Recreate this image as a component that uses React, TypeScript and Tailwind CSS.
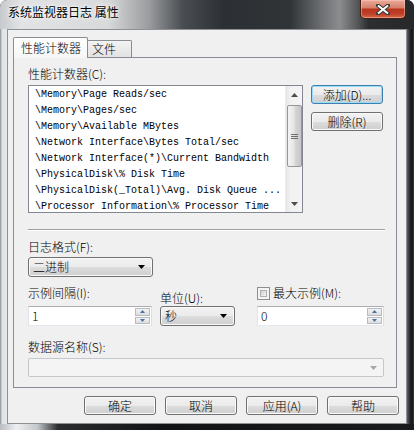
import React from 'react';

// Win7 style "system monitor log properties" dialog

const counters = [
  '\\Memory\\Page Reads/sec',
  '\\Memory\\Pages/sec',
  '\\Memory\\Available MBytes',
  '\\Network Interface\\Bytes Total/sec',
  '\\Network Interface(*)\\Current Bandwidth',
  '\\PhysicalDisk\\% Disk Time',
  '\\PhysicalDisk(_Total)\\Avg. Disk Queue ...',
  '\\Processor Information\\% Processor Time',
];

const btnBg =
  'bg-[linear-gradient(180deg,#f2f2f2_0%,#ebebeb_50%,#dddddd_50%,#cfcfcf_100%)]';

function Button({ label, focused }: { label: string; focused?: boolean }) {
  return (
    <div
      className={`w-[72px] h-[19px] rounded-[3px] border flex items-center justify-center leading-none ${btnBg} ${
        focused
          ? 'border-[#3c7fb1] shadow-[inset_0_0_0_1px_#9adcf8]'
          : 'border-[#707070] shadow-[inset_0_0_0_1px_#fafafa]'
      }`}
    >
      {label}
    </div>
  );
}

function Arrow({ color = '#000' }: { color?: string }) {
  return (
    <svg width="7" height="4" viewBox="0 0 7 4">
      <path d="M0 0h7L3.5 4z" fill={color} />
    </svg>
  );
}

function Combo({ value, width }: { value: string; width: string }) {
  return (
    <div
      className={`${width} h-[20px] rounded-[3px] border border-[#707070] shadow-[inset_0_0_0_1px_#fafafa] ${btnBg} flex items-center pl-[4px] pr-[7px]`}
    >
      <span className="flex-1 leading-none">{value}</span>
      <Arrow />
    </div>
  );
}

function SpinInput({ value, width }: { value: string; width: string }) {
  return (
    <div
      className={`${width} h-[20px] border border-[#abadb3] border-l-[#e2e3ea] border-r-[#dbdfe6] border-b-[#e3e9ef] bg-white flex items-stretch p-[1px]`}
    >
      <span className="flex-1 pl-[2px] leading-[16px]">{value}</span>
      <div className="w-[15px] flex flex-col gap-[1px]">
        <div className="flex-1 border border-[#b8bcc2] bg-[linear-gradient(180deg,#f4f4f4,#dcdcdc)] flex items-center justify-center">
          <svg width="5" height="3" viewBox="0 0 5 3">
            <path d="M0 3h5L2.5 0z" fill="#4a6fa5" />
          </svg>
        </div>
        <div className="flex-1 border border-[#b8bcc2] bg-[linear-gradient(180deg,#f4f4f4,#dcdcdc)] flex items-center justify-center">
          <svg width="5" height="3" viewBox="0 0 5 3">
            <path d="M0 0h5L2.5 3z" fill="#4a6fa5" />
          </svg>
        </div>
      </div>
    </div>
  );
}

function CounterList() {
  return (
    <div className="w-[275px] h-[128px] border border-[#828790] bg-white flex overflow-hidden">
      <div className="flex-1 pt-[1px] pl-[6px] font-['Liberation_Mono',monospace] text-[10px] leading-[16px] text-black whitespace-nowrap overflow-hidden">
        {counters.map((c) => (
          <div key={c} className="h-[16px]">
            {c}
          </div>
        ))}
      </div>
      {/* vertical scrollbar */}
      <div className="w-[17px] bg-[linear-gradient(90deg,#e6e6e6,#f2f2f2_30%,#f4f4f4)] border-l border-[#ececec] flex flex-col items-center">
        <div className="h-[17px] flex items-center justify-center">
          <svg width="7" height="4" viewBox="0 0 7 4">
            <path d="M0 4h7L3.5 0z" fill="#4d4d4d" />
          </svg>
        </div>
        <div className="mt-[2px] w-[15px] h-[62px] rounded-[2px] border border-[#979797] bg-[linear-gradient(90deg,#f3f3f3,#e6e6e6_45%,#d6d6d6_55%,#c6c6c6)] flex flex-col items-center justify-center gap-[1px]">
          <div className="w-[7px] h-px bg-[#6f6f6f]" />
          <div className="w-[7px] h-px bg-[#6f6f6f]" />
          <div className="w-[7px] h-px bg-[#6f6f6f]" />
        </div>
        <div className="flex-1" />
        <div className="h-[17px] flex items-center justify-center">
          <svg width="7" height="4" viewBox="0 0 7 4">
            <path d="M0 0h7L3.5 4z" fill="#4d4d4d" />
          </svg>
        </div>
      </div>
    </div>
  );
}

export default function App() {
  return (
    <div className="w-[414px] h-[430px] overflow-hidden rounded-t-[7px] flex flex-col font-['Noto_Sans_CJK_SC',sans-serif] font-light text-[12px] text-black bg-[#1e2023]">
      {/* Title bar */}
      <div className="h-[29px] flex items-start bg-[linear-gradient(90deg,#c6cacd_0%,#e2e3e4_5%,#d8d9da_26%,#9a9c9f_36%,#4a4e52_44%,#2c3034_54%,#303437_70%,#6f7174_78%,#8b8d8f_82%,#5a5c5e_86%,#2c2e30_89%,#26282a_100%)]">
        <div className="pl-[8px] pt-[4px] leading-[16px] font-normal [text-shadow:0_0_6px_#ffffff,0_0_3px_#ffffff]">
          系统监视器日志 属性
        </div>
        <div className="ml-auto mr-[8px] w-[46px] h-[19px] rounded-b-[5px] border border-t-0 border-[#4a1d14] bg-[linear-gradient(180deg,#e9ab9a_0%,#d7826c_42%,#b9341d_52%,#c0402a_78%,#d56a45_100%)] shadow-[inset_0_0_0_1px_rgba(255,210,200,0.45)] flex items-center justify-center">
          <svg width="14" height="11" viewBox="0 0 14 11">
            <path d="M2 1.5L12 9.5M12 1.5L2 9.5" stroke="#3b3b3b" strokeWidth="4" strokeLinecap="square" />
            <path d="M2 1.5L12 9.5M12 1.5L2 9.5" stroke="#ffffff" strokeWidth="2" />
          </svg>
        </div>
      </div>

      <div className="flex flex-1 min-h-0">
        {/* left frame */}
        <div className="w-[7px] bg-[linear-gradient(90deg,#8a8e92,#dfe3e6_30%,#e6e9ec)]" />

        {/* client area */}
        <div className="w-[400px] border border-[#8d9195] bg-[#f0f0f0] flex flex-col pt-[7px] pl-[5px]">
          {/* tabs */}
          <div className="flex items-end h-[20px]">
            <div className="relative z-10 -mb-px w-[75px] h-[21px] rounded-t-[2px] border border-b-0 border-[#898c95] bg-[linear-gradient(180deg,#ffffff,#f6f6f6)] pl-[7px] leading-[19px]">
              性能计数器
            </div>
            <div className="w-[44px] h-[17px] rounded-tr-[2px] border border-l-0 border-b-0 border-[#898c95] bg-[linear-gradient(180deg,#f3f3f3,#e2e2e2)] pl-[4px] leading-[16px]">
              文件
            </div>
          </div>

          {/* tab page */}
          <div className="w-[384px] h-[331px] border border-[#898c95] bg-[#f0f0f0] flex flex-col pl-[14px] pr-[11px]">
            <div className="mt-[8px] h-[16px] leading-[16px]">性能计数器(C):</div>
            <div className="mt-[3px] flex">
              <CounterList />
              <div className="ml-[8px] flex flex-col gap-[8px]">
                <Button label="添加(D)..." focused />
                <Button label="删除(R)" />
              </div>
            </div>

            <div className="mt-[16px] border-t border-[#a0a0a0] border-b border-b-white" />

            <div className="mt-[8px] h-[16px] leading-[16px]">日志格式(F):</div>
            <div className="mt-[2px]">
              <Combo value="二进制" width="w-[125px]" />
            </div>

            <div className="mt-[8px] flex">
              <div className="w-[124px] flex flex-col">
                <div className="h-[16px] leading-[16px]">示例间隔(I):</div>
                <div className="mt-[5px]">
                  <SpinInput value="1" width="w-[124px]" />
                </div>
              </div>
              <div className="ml-[8px] w-[75px] flex flex-col">
                <div className="h-[21px] pt-[5px] leading-[16px]">单位(U):</div>
                <Combo value="秒" width="w-[75px]" />
              </div>
              <div className="ml-[22px] w-[127px] flex flex-col">
                <div className="h-[16px] flex items-center gap-[3px]">
                  <div className="w-[13px] h-[13px] border border-[#8e8f8f] bg-[#f4f4f4] p-[2px]">
                    <div className="w-full h-full border border-[#b0b0b0] bg-[linear-gradient(135deg,#cbcfd5,#f6f6f6)]" />
                  </div>
                  <span className="leading-[16px]">最大示例(M):</span>
                </div>
                <div className="mt-[5px]">
                  <SpinInput value="0" width="w-[127px]" />
                </div>
              </div>
            </div>

            <div className="mt-[13px] h-[16px] leading-[16px]">数据源名称(S):</div>
            <div className="mt-[3px] h-[19px] w-[356px] rounded-[2px] border border-[#c4c7cc] bg-[#f4f4f4] flex items-center justify-end pr-[6px]">
              <Arrow color="#a6a6a6" />
            </div>
          </div>

          {/* dialog buttons */}
          <div className="mt-[8px] flex justify-end gap-[9px] pr-[7px]">
            <Button label="确定" />
            <Button label="取消" />
            <Button label="应用(A)" />
            <Button label="帮助" />
          </div>
        </div>

        {/* right frame */}
        <div className="w-[7px] bg-[linear-gradient(90deg,#5c5f62,#2a2c2e_40%,#101112_70%,#3c3e40)]" />
      </div>

      {/* bottom frame */}
      <div className="h-[6px] bg-[linear-gradient(90deg,#b9bdc1_0%,#eef0f2_4%,#c4c8cb_9%,#2a2c2e_14%,#121314_40%,#1a1b1c_100%)]" />
    </div>
  );
}
